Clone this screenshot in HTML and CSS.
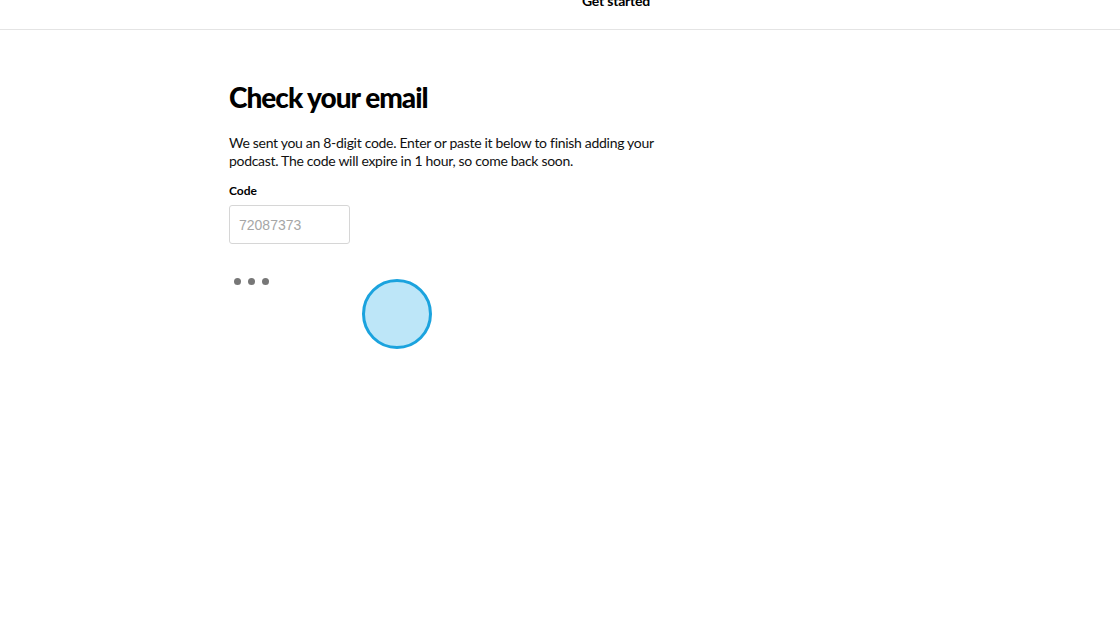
FILE: index.html
```html
<!DOCTYPE html>
<html>
<head>
<meta charset="utf-8">
<link rel="stylesheet" href="styles.css">
</head>
<body>
<header class="topbar">
  <span class="topbar-link">Get started</span>
</header>
<main class="content">
  <h1 class="title">Check your email</h1>
  <p class="lead">We sent you an 8-digit code. Enter or paste it below to finish adding your podcast. The code will expire in 1 hour, so come back soon.</p>
  <label class="label" for="code">Code</label>
  <input class="code-input" id="code" type="text" placeholder="72087373">
  <div class="loader-row">
    <div class="dots"><span></span><span></span><span></span></div>
    <div class="touch"></div>
  </div>
</main>
</body>
</html>
```
FILE: styles.css
```css
html, body {
  margin: 0;
  padding: 0;
  background: #ffffff;
  font-family: "Lato", "Liberation Sans", sans-serif;
  color: #000000;
}
.topbar {
  height: 29px;
  border-bottom: 1px solid #e4e4e4;
  display: flex;
  justify-content: center;
  align-items: flex-start;
  padding-left: 112px;
  box-sizing: content-box;
}
.topbar-link {
  font-weight: 700;
  font-size: 14px;
  margin-top: -8px;
  letter-spacing: -0.2px;
}
.content {
  padding: 0 0 0 229px;
  display: flex;
  flex-direction: column;
  align-items: flex-start;
}
.title {
  margin: 51px 0 0 0;
  font-size: 28px;
  line-height: 32px;
  font-weight: 900;
  letter-spacing: -1px;
}
.lead {
  margin: 21px 0 0 0;
  width: 460px;
  font-size: 14px;
  line-height: 18px;
  letter-spacing: -0.3px;
  color: #111;
}
.label {
  margin-top: 13px;
  font-size: 12px;
  font-weight: 700;
  line-height: 16px;
}
.code-input {
  margin-top: 6px;
  width: 121px;
  height: 39px;
  box-sizing: border-box;
  border: 1px solid #d6d6d6;
  border-radius: 3px;
  padding: 0 9px;
  font-family: "Liberation Sans", Arial, sans-serif;
  font-size: 14px;
  outline: none;
}
.code-input::placeholder {
  color: #a6a6a6;
}
.loader-row {
  margin-top: 34px;
  display: flex;
  align-items: flex-start;
}
.dots {
  display: flex;
  gap: 7px;
  padding-left: 5px;
}
.dots span {
  width: 7px;
  height: 7px;
  border-radius: 50%;
  background: #777777;
}
.touch {
  margin-left: 93px;
  margin-top: 1px;
  width: 64px;
  height: 64px;
  border-radius: 50%;
  background: #bde6f8;
  border: 3px solid #1ba3de;
}
```
